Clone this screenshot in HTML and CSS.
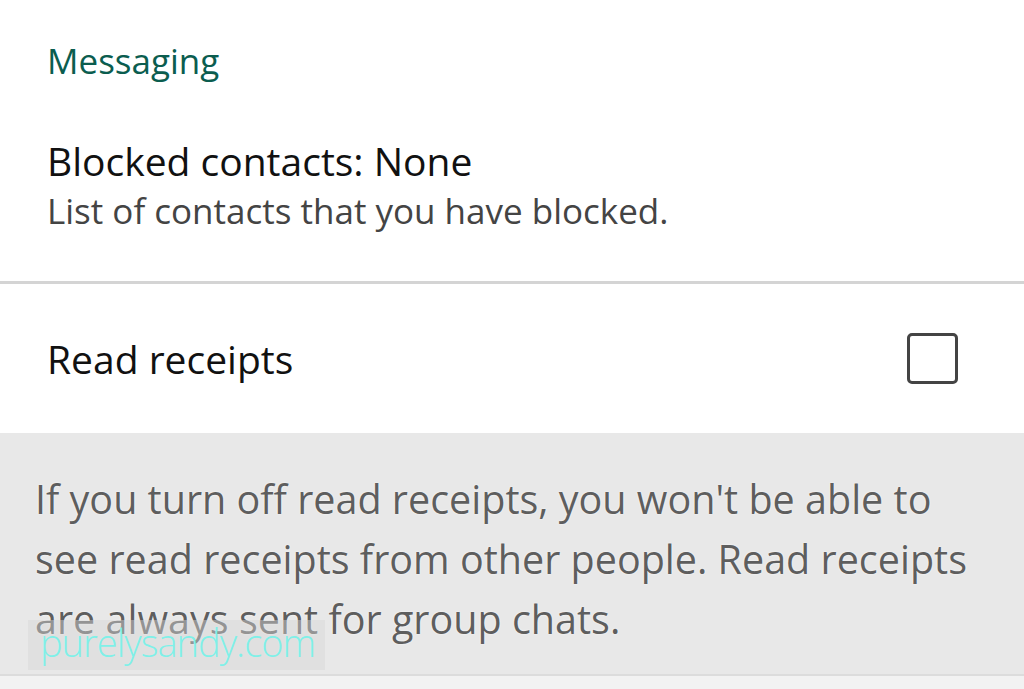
FILE: index.html
```html
<!DOCTYPE html>
<html lang="en">
<head>
    <meta charset="UTF-8">
    <meta name="viewport" content="width=device-width, initial-scale=1.0">
    <title>Messaging settings</title>
    <link rel="stylesheet" href="styles.css">
</head>
<body>

<div class="section">
    <h2 class="section-title">Messaging</h2>

    <div class="pref pref-blocked">
        <div class="pref-title">Blocked contacts: None</div>
        <div class="pref-summary">List of contacts that you have blocked.</div>
    </div>
</div>

<div class="pref pref-check">
    <div class="pref-title">Read receipts</div>
    <span class="checkbox"></span>
</div>

<div class="footer-note">
    <p>If you turn off read receipts, you won't be able to see read receipts from other people. Read receipts are always sent for group chats.</p>
    <span class="watermark">purelysandy.com</span>
</div>

</body>
</html>
```

FILE: styles.css
```css
body {
    margin: 0;
    font-family: "Open Sans", "Noto Sans", sans-serif;
    background-color: #f2f2f2;
    width: 1024px;
    height: 689px;
    overflow: hidden;
}
.section {
    background-color: white;
    border-bottom: 3px solid #d4d4d4;
    padding: 0 47px;
    height: 281px;
}
.section-title {
    margin: 0;
    padding-top: 38px;
    font-size: 35px;
    font-weight: normal;
    color: #0b5d4f;
    line-height: 46px;
}
.pref-blocked {
    padding-top: 50px;
}
.pref-title {
    font-size: 39px;
    color: #111;
    line-height: 54px;
}
.pref-summary {
    font-size: 35px;
    color: #444;
    line-height: 46px;
}
.pref-check {
    background-color: white;
    display: flex;
    align-items: center;
    justify-content: space-between;
    padding: 0 66px 0 47px;
    height: 149px;
}
.checkbox {
    width: 45px;
    height: 45px;
    border: 3px solid #444;
    border-radius: 5px;
}
.footer-note {
    background-color: #e8e8e8;
    border-bottom: 2px solid #dcdcdc;
    height: 241px;
    padding: 0 44px 0 35px;
    position: relative;
}
.footer-note p {
    margin: 0;
    padding-top: 36px;
    font-size: 39.5px;
    line-height: 60px;
    color: #5e5e5e;
    text-shadow: 0 0 2px #fff;
}
.watermark {
    position: absolute;
    left: 28px;
    top: 187px;
    padding: 0 10px 6px 12px;
    background-color: rgba(215, 215, 215, 0.45);
    font-size: 38px;
    line-height: 44px;
    color: #7ff0e8;
    font-weight: 300;
    letter-spacing: -1px;
}
```
